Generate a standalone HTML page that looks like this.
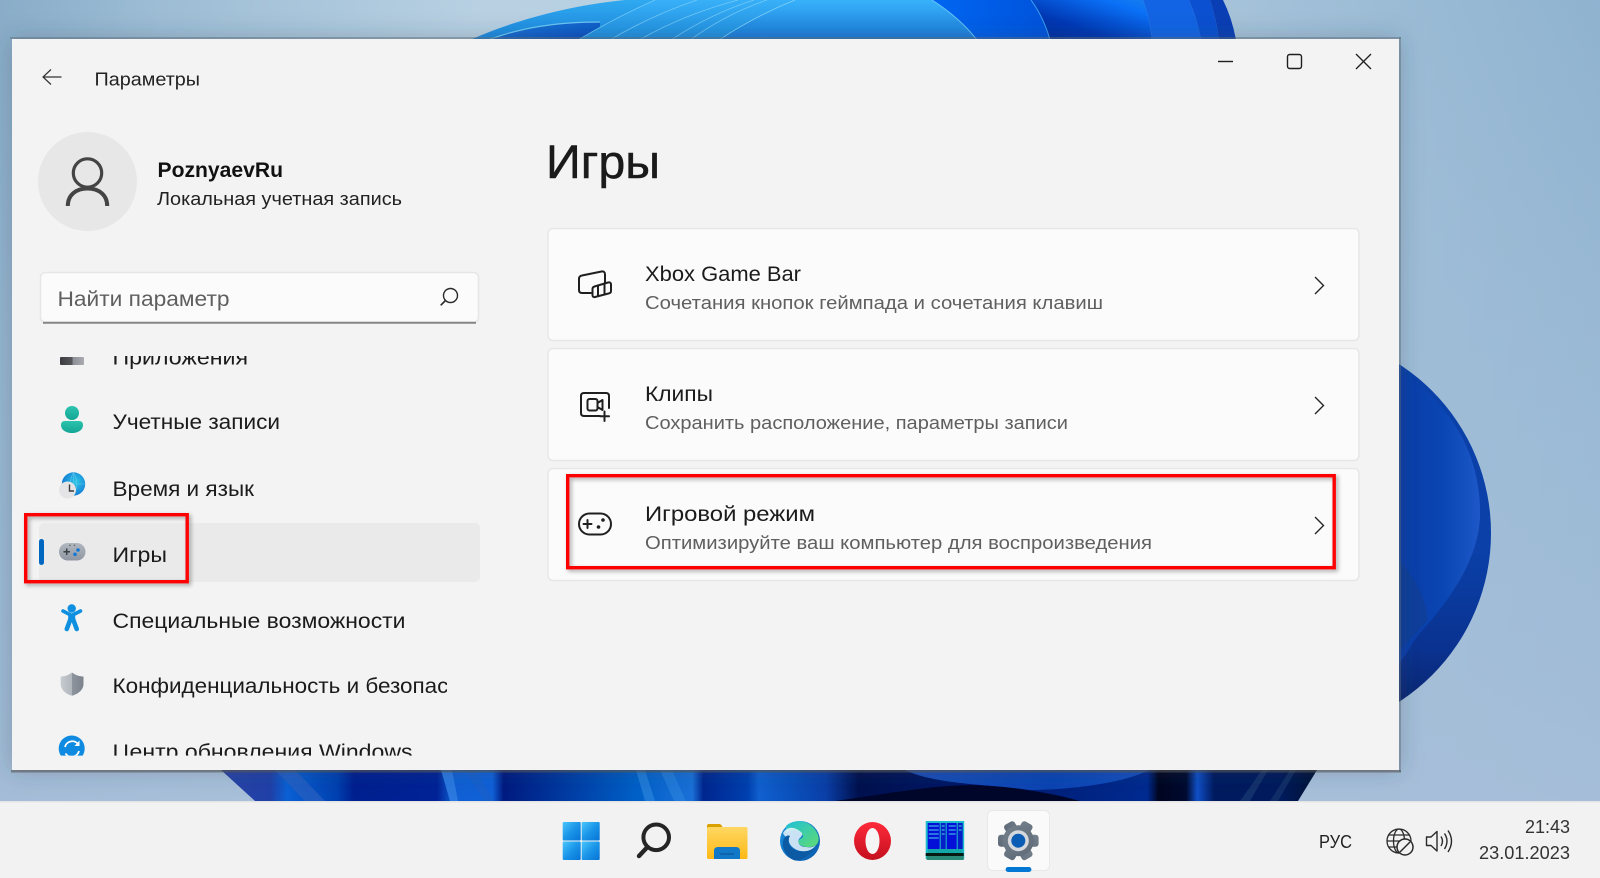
<!DOCTYPE html>
<html lang="ru">
<head>
<meta charset="utf-8">
<title>Параметры</title>
<style>
html,body{margin:0;padding:0;width:1600px;height:878px;overflow:hidden;background:#9dbcd6}
svg{display:block}
text{font-family:"Liberation Sans",sans-serif}
.t21{font-size:21.5px;fill:#1b1b1b}
.sub{font-size:18px;fill:#5f5f5f}
</style>
</head>
<body>
<svg width="1600" height="878" viewBox="0 0 1600 878" xmlns="http://www.w3.org/2000/svg">
<defs>
<linearGradient id="bgH" x1="0" x2="1" y1="0" y2="0">
<stop offset="0" stop-color="#89acc8"/><stop offset=".1" stop-color="#9dbdd5"/><stop offset=".3" stop-color="#b8d0e2"/><stop offset=".6" stop-color="#b4cee0"/><stop offset=".8" stop-color="#a2c0d8"/><stop offset="1" stop-color="#8fb3d0"/>
</linearGradient>
<linearGradient id="bgV" x1="0" x2="0" y1="0" y2="1">
<stop offset="0" stop-color="#a8bfd9" stop-opacity="0"/><stop offset=".5" stop-color="#a4bfd9" stop-opacity=".6"/><stop offset="1" stop-color="#aabfda" stop-opacity=".9"/>
</linearGradient>
<linearGradient id="wing" x1="0" x2="0" y1="0" y2="1"><stop offset="0" stop-color="#2fa9f0"/><stop offset="1" stop-color="#1c86dc"/></linearGradient>
<linearGradient id="wing2" x1="0" x2="1" y1="0" y2="1"><stop offset="0" stop-color="#1f7fdc"/><stop offset="1" stop-color="#0648bc"/></linearGradient>
<linearGradient id="pet" x1="0" x2="0" y1="0" y2="1"><stop offset="0" stop-color="#38b0f8"/><stop offset="1" stop-color="#1f8cdc"/></linearGradient>
<linearGradient id="petC" x1="0" x2="0" y1="0" y2="1"><stop offset="0" stop-color="#38b2fb"/><stop offset="1" stop-color="#1a78d6"/></linearGradient>
<linearGradient id="r1" x1="0" x2="1" y1="0" y2="0"><stop offset="0" stop-color="#0066f2"/><stop offset="1" stop-color="#0052da"/></linearGradient>
<linearGradient id="r2" x1="0" x2="1" y1="1" y2="0"><stop offset="0" stop-color="#002a9a"/><stop offset=".35" stop-color="#0038b4"/><stop offset=".8" stop-color="#0a70f6"/><stop offset="1" stop-color="#1880ee"/></linearGradient>
<linearGradient id="bot" x1="0" x2="1" y1="0" y2="0">
<stop offset="0" stop-color="#2a44a4"/><stop offset=".05" stop-color="#2040a8"/><stop offset=".065" stop-color="#0a60d4"/><stop offset=".11" stop-color="#0040b0"/><stop offset=".125" stop-color="#001f90"/><stop offset=".2" stop-color="#002296"/><stop offset=".215" stop-color="#1060d4"/><stop offset=".25" stop-color="#1060d8"/><stop offset=".26" stop-color="#001a80"/><stop offset=".38" stop-color="#0060c8"/><stop offset=".43" stop-color="#1a70d8"/><stop offset=".44" stop-color="#00268f"/><stop offset=".48" stop-color="#0040b0"/><stop offset=".49" stop-color="#1060d0"/><stop offset=".52" stop-color="#0a50bc"/><stop offset=".55" stop-color="#0a3fa8"/><stop offset=".58" stop-color="#00104e"/><stop offset=".7" stop-color="#001a70"/><stop offset=".84" stop-color="#002a90"/><stop offset=".85" stop-color="#000520"/><stop offset=".875" stop-color="#000a30"/><stop offset=".885" stop-color="#1050c8"/><stop offset=".9" stop-color="#001a60"/><stop offset=".96" stop-color="#001a5c"/><stop offset="1" stop-color="#00102c"/>
</linearGradient>
<linearGradient id="wave" x1="0" x2="1" y1="0" y2="0"><stop offset="0" stop-color="#1c4fb8"/><stop offset=".6" stop-color="#0a44b4"/><stop offset="1" stop-color="#1650c0"/></linearGradient>
<linearGradient id="rp1" x1="0" x2="1" y1="0" y2="0"><stop offset="0" stop-color="#0a3aa4"/><stop offset=".6" stop-color="#0a46b4"/><stop offset="1" stop-color="#1e58c8"/></linearGradient>
<linearGradient id="rbase" x1="0" x2="0" y1="0" y2="1"><stop offset="0" stop-color="#0a40a8"/><stop offset=".55" stop-color="#0a40a8"/><stop offset=".8" stop-color="#0a3290"/><stop offset="1" stop-color="#0a1f60"/></linearGradient>
<linearGradient id="start" x1="0" x2="1" y1="0" y2="1"><stop offset="0" stop-color="#4ac6fb"/><stop offset=".5" stop-color="#1a95e8"/><stop offset="1" stop-color="#0673d6"/></linearGradient>
<linearGradient id="fold" x1="0" x2="0" y1="0" y2="1"><stop offset="0" stop-color="#ffd762"/><stop offset="1" stop-color="#fdb916"/></linearGradient>
<linearGradient id="edge" x1="0" x2="1" y1="0" y2="1"><stop offset="0" stop-color="#1a8fdc"/><stop offset=".6" stop-color="#0f72c4"/><stop offset="1" stop-color="#0c59a4"/></linearGradient>
<linearGradient id="edgeT" x1="0" x2="1" y1="0" y2="1"><stop offset="0" stop-color="#1fc0d8"/><stop offset="1" stop-color="#5fdb72"/></linearGradient>
<linearGradient id="op" x1="0" x2="0" y1="0" y2="1"><stop offset="0" stop-color="#ff2a3a"/><stop offset="1" stop-color="#c4101e"/></linearGradient>
<linearGradient id="gear" x1="0" x2="1" y1="0" y2="1"><stop offset="0" stop-color="#737f8b"/><stop offset="1" stop-color="#5f6b78"/></linearGradient>
<linearGradient id="teal" x1="0" x2="0" y1="0" y2="1"><stop offset="0" stop-color="#2cc4ae"/><stop offset="1" stop-color="#14a594"/></linearGradient>
<linearGradient id="pad" x1="0" x2="0" y1="0" y2="1"><stop offset="0" stop-color="#b2b8c0"/><stop offset="1" stop-color="#8f96a2"/></linearGradient>
<linearGradient id="shield" x1="0" x2="1" y1="0" y2="0"><stop offset="0" stop-color="#c6cbd0"/><stop offset=".5" stop-color="#b0b6bc"/><stop offset=".5" stop-color="#8d949c"/><stop offset="1" stop-color="#7c838c"/></linearGradient>
<radialGradient id="globe" cx=".6" cy=".4" r=".7"><stop offset="0" stop-color="#2fc6e8"/><stop offset="1" stop-color="#0d6fd0"/></radialGradient>
<linearGradient id="apps" x1="0" x2="1" y1="0" y2="0"><stop offset="0" stop-color="#3c3c40"/><stop offset=".5" stop-color="#55575c"/><stop offset=".55" stop-color="#8d9096"/><stop offset="1" stop-color="#a9abb0"/></linearGradient>
<filter id="winSh" x="-10%" y="-10%" width="120%" height="120%"><feDropShadow dx="0" dy="0" stdDeviation="12" flood-color="#33424f" flood-opacity=".3"/></filter>
<filter id="redSh" x="-5%" y="-15%" width="110%" height="130%"><feDropShadow dx="2" dy="2" stdDeviation="2" flood-color="#000" flood-opacity=".35"/></filter>
<clipPath id="nav"><rect x="40" y="356" width="407" height="399.6"/></clipPath>
<clipPath id="trap"><polygon points="221,770 1317,770 1298,801 255,801"/></clipPath>
<clipPath id="topc"><rect x="0" y="0" width="1600" height="39"/></clipPath>
<clipPath id="rc"><circle cx="1290" cy="533" r="201"/></clipPath>
</defs>

<!-- wallpaper -->
<rect width="1600" height="878" fill="url(#bgH)"/>
<rect width="1600" height="878" fill="url(#bgV)"/>

<!-- bloom top -->
<g clip-path="url(#topc)">
<path d="M470 40C510 22 565 6 625 0L760 0V40Z" fill="url(#wing)"/>
<path d="M488 40C520 28 555 22 600 22L600 40Z" fill="url(#wing2)"/>
<path d="M488 40C520 28 555 22 600 22" fill="none" stroke="#6cc6f2" stroke-width="1.2"/>
<path d="M578 40C600 26 630 10 655 0H940L980 40Z" fill="url(#pet)"/>
<g fill="none" stroke="#7fd0f8" stroke-width=".8" stroke-opacity=".8">
<path d="M578 40Q615 18 655 0"/>
<path d="M610 40Q650 16 697 0"/>
<path d="M639 40Q685 14 738 0"/>
<path d="M671 40Q710 14 754 0"/>
<path d="M690 40Q726 14 767 0"/>
</g>
<path d="M719 40Q755 16 795 0H932Q960 18 977 40Z" fill="url(#petC)"/>
<path d="M719 40Q755 16 795 0" fill="none" stroke="#7fd0f8" stroke-width=".8"/>
<path d="M932 0Q960 18 977 40H1052Q1046 18 1031 0Z" fill="url(#r1)"/>
<path d="M932 0Q960 18 977 40" fill="none" stroke="#66c4f6" stroke-width="1"/>
<path d="M1031 0Q1044 18 1050 40H1152Q1150 18 1143 0Z" fill="url(#r2)"/>
<path d="M1031 0Q1044 18 1050 40" fill="none" stroke="#3aa0f0" stroke-width="1"/>
<path d="M1143 0Q1150 18 1152 40H1201Q1197 18 1189 0Z" fill="#1264e4"/>
<path d="M1189 0Q1197 18 1201 40H1219Q1216 18 1210 0Z" fill="#0a50d0"/>
<path d="M1210 0Q1216 18 1219 40H1236Q1232 18 1223 0Z" fill="#0a3eb4"/>
</g>

<!-- bloom right -->
<g clip-path="url(#rc)">
<rect x="1390" y="330" width="110" height="400" fill="url(#rbase)"/>
<path d="M1390 367C1445 395 1482 450 1480 517C1478 560 1450 600 1420 633C1410 645 1405 660 1390 672Z" fill="url(#rp1)"/>
<path d="M1390 550Q1425 585 1428 620Q1410 640 1390 660Z" fill="#123e8e" opacity=".55"/>
</g>

<!-- bloom bottom -->
<g clip-path="url(#trap)">
<rect x="215" y="765" width="1110" height="40" fill="url(#bot)"/>
<polygon points="275,770 295,770 325,801 305,801" fill="#2a5fc0" opacity=".7"/>
<polygon points="441,770 452,770 458,801 450,801" fill="#2a78e0"/>
<polygon points="465,770 475,770 494,801 484,801" fill="#1a60c8" opacity=".6"/>
<polygon points="636,770 645,770 655,801 645,801" fill="#3088e0" opacity=".6"/>
<polygon points="660,770 672,770 686,801 674,801" fill="#3088e0" opacity=".5"/>
<path d="M905 770C935 785 1000 785 1030 790C1060 790 1120 785 1149 770Z" fill="url(#wave)"/>
<path d="M835 801C880 795 930 785 975 785C1020 787 1060 795 1080 801Z" fill="#00052a"/>
<polygon points="1240,801 1262,770 1268,770 1250,801" fill="#1a3a70" opacity=".7"/>
<polygon points="1270,801 1290,770 1296,770 1278,801" fill="#1a3a70" opacity=".6"/>
</g>

<!-- taskbar -->
<rect x="0" y="801" width="1600" height="77" fill="#f2f2f2"/>
<rect x="0" y="801" width="1600" height="1.5" fill="#e4e4e4"/>

<!-- window -->
<rect x="12" y="39" width="1387" height="731" fill="#f3f3f3" filter="url(#winSh)"/>
<rect x="10" y="37" width="1391" height="2" fill="#5e6d7a" fill-opacity=".45"/>
<rect x="1399" y="37" width="2" height="735" fill="#5e6d7a" fill-opacity=".45"/>
<rect x="11" y="770" width="1390" height="2.500" fill="#555" fill-opacity=".6"/>
<rect x="12" y="39" width="1387" height="731" fill="#f3f3f3"/>

<!-- title bar -->
<path d="M61.5 77H43M51 69.5L43 77L51 84.5" fill="none" stroke="#333" stroke-width="1.2"/>
<text x="94.500" y="85.5" font-size="18.5" textLength="105.500" lengthAdjust="spacingAndGlyphs" fill="#222">Параметры</text>
<path d="M1218 61.5H1233" stroke="#1f1f1f" stroke-width="1.4"/>
<rect x="1287.5" y="54.5" width="14" height="14" rx="2.2" fill="none" stroke="#1f1f1f" stroke-width="1.4"/>
<path d="M1356 54L1371 69M1371 54L1356 69" stroke="#1f1f1f" stroke-width="1.3"/>

<!-- account -->
<circle cx="87.5" cy="181.5" r="49.5" fill="#e7e7e7"/>
<circle cx="87.5" cy="173" r="14.200" fill="none" stroke="#444" stroke-width="3.200"/>
<path d="M67.800 206C67.800 195 76 188.500 87.500 188.500S107.200 195 107.200 206" fill="none" stroke="#444" stroke-width="4"/>
<text x="157.500" y="177" font-size="21.5" font-weight="700" textLength="125.500" lengthAdjust="spacingAndGlyphs" fill="#111">PoznyaevRu</text>
<text x="157" y="205" font-size="18.5" textLength="245" lengthAdjust="spacingAndGlyphs" fill="#222">Локальная учетная запись</text>

<!-- search -->
<rect x="40.500" y="272.500" width="438" height="50" rx="5" fill="#fbfbfb" stroke="#e6e6e6" stroke-width="1.5"/>
<path d="M43 322.700H476" stroke="#858585" stroke-width="2"/>
<text x="57.500" y="306" font-size="21.500" textLength="172" lengthAdjust="spacingAndGlyphs" fill="#5f5f5f">Найти параметр</text>
<circle cx="450.500" cy="295.500" r="7" fill="none" stroke="#2a2a2a" stroke-width="1.4"/>
<path d="M445.500 300.500L440.700 305.300" stroke="#2a2a2a" stroke-width="1.6"/>

<!-- nav selection -->
<rect x="39" y="523" width="441" height="59" rx="5" fill="#eaeaea"/>
<rect x="39" y="539" width="5" height="26" rx="2.500" fill="#0067c0"/>

<g clip-path="url(#nav)">
<rect x="60" y="357" width="24" height="8" rx="1" fill="url(#apps)"/>
<text x="112.500" y="364.500" class="t21" textLength="135.500" lengthAdjust="spacingAndGlyphs">Приложения</text>
<text x="112.500" y="429" class="t21" textLength="167.500" lengthAdjust="spacingAndGlyphs">Учетные записи</text>
<text x="112.500" y="496" class="t21" textLength="141.500" lengthAdjust="spacingAndGlyphs">Время и язык</text>
<text x="112.500" y="562" class="t21" textLength="54.500" lengthAdjust="spacingAndGlyphs">Игры</text>
<text x="112.500" y="628" class="t21" textLength="293" lengthAdjust="spacingAndGlyphs">Специальные возможности</text>
<text x="112.500" y="693" class="t21" textLength="394" lengthAdjust="spacingAndGlyphs">Конфиденциальность и безопасность</text>
<text x="112.500" y="759" class="t21" textLength="300" lengthAdjust="spacingAndGlyphs">Центр обновления Windows</text>

<!-- accounts icon -->
<circle cx="72" cy="413" r="7" fill="url(#teal)"/>
<path d="M61 425Q61 421 65 421H79Q83 421 83 425C83 430 78 433 72 433S61 430 61 425Z" fill="url(#teal)"/>
<!-- time icon -->
<circle cx="73.500" cy="484" r="11.700" fill="url(#globe)"/>
<path d="M73.500 472.500V495.500M62 484H85M73.500 472.500Q67 484 73.500 495.500M73.500 472.500Q80 484 73.500 495.500" stroke="#8adff0" stroke-width=".6" fill="none" opacity=".6"/>
<circle cx="67.500" cy="490" r="8.500" fill="#e4e4e6"/>
<path d="M69.500 484.500V491H74" fill="none" stroke="#3c3c3c" stroke-width="1.400"/>
<!-- game icon -->
<rect x="59" y="543" width="26.500" height="17.500" rx="8.700" fill="url(#pad)"/>
<path d="M63.500 551.700H70M66.700 548.500V555" stroke="#3c3f44" stroke-width="1.500"/>
<circle cx="78" cy="550" r="1.800" fill="#1278d8"/><circle cx="75" cy="554.300" r="1.800" fill="#1278d8"/>
<circle cx="70" cy="545.300" r=".8" fill="#666"/><circle cx="74.500" cy="545.300" r=".8" fill="#666"/>
<!-- accessibility icon -->
<circle cx="71.700" cy="608.500" r="4.200" fill="#0f8fe0"/>
<path d="M63 611L71.700 615.500L80.500 611" fill="none" stroke="#0f8fe0" stroke-width="3.600" stroke-linecap="round" stroke-linejoin="round"/>
<path d="M71.700 615V620" fill="none" stroke="#0f8fe0" stroke-width="7"/>
<path d="M70.500 619L66.800 629M73 619L76.700 629" fill="none" stroke="#0f8fe0" stroke-width="4.600" stroke-linecap="round"/>
<!-- shield icon -->
<path d="M72 672.500C76 675.500 80 676.500 83.500 676.500V684C83.500 690 78 694 72 695.700C66 694 60.700 690 60.700 684V676.500C64 676.500 68 675.500 72 672.500Z" fill="url(#shield)"/>
<!-- update icon -->
<circle cx="71.700" cy="748.500" r="13" fill="#0e8ae0"/>
<path d="M65 747A7.500 7.500 0 0 1 78.500 744.500M79 751A7.500 7.500 0 0 1 65.500 753.500" fill="none" stroke="#fff" stroke-width="1.800"/>
<path d="M79.500 740.500V746H74.500Z" fill="#fff"/>
</g>

<!-- heading -->
<text x="546" y="178" font-size="47" textLength="114" lengthAdjust="spacingAndGlyphs" fill="#1a1a1a" stroke="#1a1a1a" stroke-width=".5">Игры</text>

<!-- cards -->
<g fill="#fbfbfb" stroke="#e7e7e7" stroke-width="1.500">
<rect x="548" y="228.500" width="811" height="112" rx="5"/>
<rect x="548" y="348.500" width="811" height="112" rx="5"/>
<rect x="548" y="468.500" width="811" height="112" rx="5"/>
</g>

<text x="645" y="281" class="t21" textLength="156" lengthAdjust="spacingAndGlyphs">Xbox Game Bar</text>
<text x="645" y="309" class="sub" textLength="458" lengthAdjust="spacingAndGlyphs">Сочетания кнопок геймпада и сочетания клавиш</text>
<text x="645" y="401" class="t21" textLength="68" lengthAdjust="spacingAndGlyphs">Клипы</text>
<text x="645" y="429" class="sub" textLength="423" lengthAdjust="spacingAndGlyphs">Сохранить расположение, параметры записи</text>
<text x="645" y="521" class="t21" textLength="170" lengthAdjust="spacingAndGlyphs">Игровой режим</text>
<text x="645" y="549" class="sub" textLength="507" lengthAdjust="spacingAndGlyphs">Оптимизируйте ваш компьютер для воспроизведения</text>

<path d="M1315 277L1323.500 285.500L1315 294M1315 397L1323.500 405.500L1315 414M1315 517L1323.500 525.500L1315 534" fill="none" stroke="#262626" stroke-width="1.400"/>

<!-- card icons -->
<g fill="none" stroke="#1f1f1f" stroke-width="2" stroke-linejoin="round" stroke-linecap="round">
<path d="M591 293H582Q579 293 579 290V279Q579 276 582 275.500L601.500 271.500Q605 271 605 274.500V283"/>
<path d="M594.500 286.500L608 282.500Q611 281.800 611 284.500V291Q611 293 608.500 293.500L595 297Q592.500 297.500 592.500 295V289Q592.500 287 594.500 286.500Z"/>
<path d="M598 285.500V296M604.500 283.500V294.500"/>
<path d="M600 416H584Q581 416 581 413V396Q581 393 584 393H606Q609 393 609 396V408"/>
<rect x="587.500" y="399" width="10" height="11.500" rx="2"/>
<path d="M597.500 403L602.500 400V410L597.500 407"/>
<path d="M604.500 411.500V421M600 416.300H609"/>
<rect x="579" y="513.500" width="32" height="21" rx="10.500"/>
<path d="M583.500 524H591.500M587.500 520V528"/>
</g>
<circle cx="603" cy="520" r="1.800" fill="#1f1f1f"/><circle cx="598.500" cy="527" r="1.800" fill="#1f1f1f"/>

<!-- red rectangles -->
<rect x="25.700" y="514.700" width="161.500" height="67" fill="none" stroke="#f00" stroke-width="3.400" filter="url(#redSh)"/>
<rect x="567.700" y="475.700" width="766.500" height="92" fill="none" stroke="#f00" stroke-width="3.400" filter="url(#redSh)"/>

<!-- taskbar icons -->
<g fill="url(#start)">
<rect x="562.700" y="822" width="18" height="18.500" rx="1"/><rect x="581.700" y="822" width="18" height="18.500" rx="1"/>
<rect x="562.700" y="841.500" width="18" height="18.500" rx="1"/><rect x="581.700" y="841.500" width="18" height="18.500" rx="1"/>
</g>
<circle cx="656.200" cy="837.300" r="12.800" fill="none" stroke="#252525" stroke-width="4"/>
<path d="M646.500 848L639 856" stroke="#252525" stroke-width="4.400" stroke-linecap="round"/>

<path d="M707 826Q707 824 709 824H719Q721 824 722 826L723 829H707Z" fill="#d9a000"/>
<rect x="707" y="827" width="40.500" height="32" rx="1.500" fill="url(#fold)"/>
<path d="M714 859V851Q714 847 718 847H736Q740 847 740 851V859Z" fill="#1178c8"/>
<path d="M720 854H734" stroke="#0a4f90" stroke-width="1"/>

<circle cx="800" cy="841" r="20" fill="url(#edge)"/>
<path d="M786 826C794 818 812 819 818 835C821 845 813 848 806 847C800 846 797 843 799 840C801 838 803 838 803 836C801 830 792 828 786 833Z" fill="url(#edgeT)"/>
<path d="M783 833C787 826 795 826 802 833C803 835 801 837 799 839C797 843 800 847 806 847C810 848 814 847 816 845C812 851 804 853 797 850C791 847 788 843 789 838C786 837 784 836 783 833Z" fill="#e9f3fa" opacity=".85"/>
<path d="M783 846C782 838 787 834 790 836C786 842 791 850 799 851C805 852 810 851 815 848C808 857 800 861 795 860.500C788 858 784 852 783 846Z" fill="#0c5aa4"/>

<ellipse cx="872.500" cy="841" rx="18.500" ry="19" fill="url(#op)"/>
<ellipse cx="872.500" cy="841" rx="7" ry="13" fill="#f5f5f5"/>

<g transform="translate(12.700,0)">
<rect x="913" y="821" width="38.500" height="38" fill="#1dbdd0"/>
<rect x="915" y="823" width="12" height="26" fill="#0410d8"/>
<rect x="928" y="823" width="5" height="26" fill="#0620c8"/>
<rect x="934" y="823" width="10" height="26" fill="#0410d8"/>
<rect x="945" y="823" width="5" height="26" fill="#0620c8"/>
<path d="M916 826H926M916 830H926M916 834H926M916 838H926M936 826H943M936 830H943M936 834H943M929 826H932M929 830H932M929 834H932M946 826H949M946 830H949" stroke="#4ad8e8" stroke-width="1"/>
<rect x="915" y="849" width="35" height="4" fill="#14a8a8"/>
<rect x="913" y="853" width="38" height="3" fill="#071a14"/>
<rect x="914" y="856" width="37" height="4" fill="#2a8a78"/>
</g>

<rect x="987.500" y="810.500" width="62" height="60" rx="5" fill="#fafafa" stroke="#e8e8e8"/>
<g fill="url(#gear)">
<rect x="1012.300" y="820.400" width="12" height="40.600" rx="3" transform="rotate(90 1018.300 840.700)"/>
<rect x="1012.300" y="820.400" width="12" height="40.600" rx="3" transform="rotate(30 1018.300 840.700)"/>
<rect x="1012.300" y="820.400" width="12" height="40.600" rx="3" transform="rotate(150 1018.300 840.700)"/>
<circle cx="1018.300" cy="840.700" r="15.500"/>
</g>
<circle cx="1018.300" cy="840.700" r="10.500" fill="#d4d8dc"/>
<circle cx="1018.300" cy="840.700" r="7" fill="#0a5cb4"/>
<rect x="1005.600" y="867" width="25.800" height="5" rx="2.500" fill="#0078d4"/>

<!-- tray -->
<text x="1319" y="848" font-size="18" textLength="33" lengthAdjust="spacingAndGlyphs" fill="#222">РУС</text>
<g fill="none" stroke="#2a2a2a" stroke-width="1.300">
<circle cx="1399" cy="841" r="12"/>
<ellipse cx="1399" cy="841" rx="5.500" ry="12"/>
<path d="M1387 841H1411M1389 835H1409M1389 847H1409"/>
</g>
<circle cx="1405" cy="847" r="8" fill="#f2f2f2" stroke="#2a2a2a" stroke-width="1.500"/>
<path d="M1400 852L1410 842" stroke="#2a2a2a" stroke-width="1.500"/>
<g fill="none" stroke="#2a2a2a" stroke-width="1.400">
<path d="M1426.500 837H1431L1437 831.500V851L1431 845.500H1426.500Z" stroke-linejoin="round"/>
<path d="M1441 836.500Q1444 841 1441 846M1444.500 833.500Q1449.500 841 1444.500 849M1448 830.500Q1455 841 1448 852"/>
</g>
<text x="1570" y="833" font-size="18" text-anchor="end" fill="#333">21:43</text>
<text x="1570" y="859" font-size="18" text-anchor="end" fill="#333" textLength="91" lengthAdjust="spacingAndGlyphs">23.01.2023</text>
</svg>
</body>
</html>
